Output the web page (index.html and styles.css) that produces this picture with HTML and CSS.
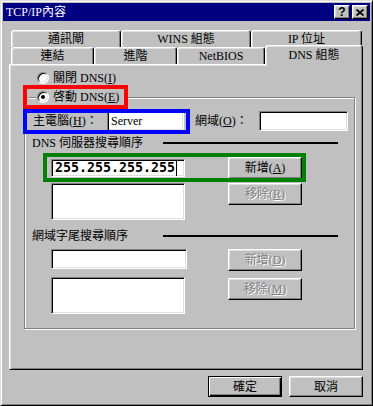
FILE: index.html
```html
<!DOCTYPE html>
<html lang="zh-Hant">
  <head>
    <meta charset="UTF-8" />
    <title>TCP/IP內容</title>
    <link rel="stylesheet" href="styles.css">
  </head>
  <body>
    <div class="window">
      <div class="titlebar">
        <span class="title">TCP/IP內容</span>
        <div class="title_btns">
          <span class="title_btn help">?</span>
          <span class="title_btn">
            <svg width="8" height="7" viewBox="0 0 8 7">
              <path d="M0.5 0.5L7.5 6.5M7.5 0.5L0.5 6.5" stroke="#000" stroke-width="1.7" fill="none" />
            </svg>
          </span>
        </div>
      </div>

      <div class="tabs">
        <div class="tab_row">
          <div class="tab w_110">通訊閘</div>
          <div class="tab w_130">WINS 組態</div>
          <div class="tab w_111">IP 位址</div>
        </div>
        <div class="tab_row">
          <div class="tab w_83">連結</div>
          <div class="tab w_83">進階</div>
          <div class="tab w_88">NetBIOS</div>
          <div class="tab active w_98">DNS 組態</div>
        </div>
      </div>

      <div class="panel">
        <div class="radio first">
          <span class="circle"></span>
          <span class="label">關閉 DNS(<u>I</u>)</span>
        </div>

        <div class="group">
          <div class="group_head mark_red">
            <span class="seg"></span>
            <div class="radio">
              <span class="circle checked"></span>
              <span class="label">啓動 DNS(<u>E</u>)</span>
            </div>
          </div>

          <div class="host_row">
            <div class="host mark_blue">
              <span>主電腦(<u>H</u>)：</span>
              <div class="field w_77">Server</div>
            </div>
            <div class="domain">
              <span class="domain_label">網域(<u>O</u>)：</span>
              <div class="field w_89"></div>
            </div>
          </div>

          <div class="sub_head">
            <span>DNS 伺服器搜尋順序</span>
            <span class="line"></span>
          </div>

          <div class="dns_row mark_green">
            <div class="field ip w_134">255.255.255.255<span class="caret"></span></div>
            <div class="btn">新增(<u>A</u>)</div>
          </div>

          <div class="list_row">
            <div class="list"></div>
            <div class="btn disabled">移除(<u>R</u>)</div>
          </div>

          <div class="sub_head second">
            <span>網域字尾搜尋順序</span>
            <span class="line"></span>
          </div>

          <div class="list_row suffix">
            <div class="field w_136"></div>
            <div class="btn disabled">新增(<u>D</u>)</div>
          </div>

          <div class="list_row last">
            <div class="list"></div>
            <div class="btn disabled">移除(<u>M</u>)</div>
          </div>
        </div>
      </div>

      <div class="footer">
        <div class="btn default">確定</div>
        <div class="btn">取消</div>
      </div>
    </div>
  </body>
</html>
```

FILE: styles.css
```css
* {
  box-sizing: border-box;
}

html,
body {
  margin: 0;
  padding: 0;
}

body {
  width: 373px;
  height: 406px;
  background: #c0c0c0;
  color: #000;
  font-family: "Liberation Serif", "Noto Sans CJK TC", serif;
  font-size: 12px;
  line-height: 16px;
}

u {
  text-decoration: underline;
  text-underline-offset: 1px;
}

/* window frame */
.window {
  width: 373px;
  height: 406px;
  padding: 2px;
  background: #c0c0c0;
  border: 1px solid;
  border-color: #dfdfdf #000 #000 #dfdfdf;
  box-shadow: inset 1px 1px #fff, inset -1px -1px #808080;
}

.titlebar {
  height: 18px;
  display: flex;
  align-items: center;
  padding-left: 3px;
  background: #000080;
  color: #fff;
}
.title_btns {
  display: flex;
  gap: 2px;
  margin-left: auto;
  margin-right: 2px;
}
.title_btn {
  width: 16px;
  height: 14px;
  display: flex;
  align-items: center;
  justify-content: center;
  background: #c0c0c0;
  border: 1px solid;
  border-color: #fff #000 #000 #fff;
  box-shadow: inset -1px -1px #808080, inset 1px 1px #dfdfdf;
}
.title_btn.help {
  color: #000;
  font-family: "Liberation Sans", sans-serif;
  font-weight: bold;
  font-size: 12px;
  line-height: 12px;
}

/* tabs */
.tabs {
  margin-top: 9px;
  padding-left: 8px;
}
.tab_row {
  display: flex;
  align-items: flex-end;
  height: 17px;
}
.tab {
  height: 17px;
  display: flex;
  align-items: center;
  justify-content: center;
  background: #c0c0c0;
  border: 1px solid;
  border-bottom: 0;
  border-color: #fff #000 transparent #fff;
  border-radius: 3px 3px 0 0;
  box-shadow: inset -1px 0 #808080, inset 1px 1px #dfdfdf;
}
.tab.active {
  height: 21px;
  margin-bottom: -2px;
  padding-bottom: 3px;
  position: relative;
  z-index: 1;
}
.w_110 { width: 110px; }
.w_130 { width: 130px; }
.w_111 { width: 111px; }
.w_83 { width: 83px; }
.w_88 { width: 88px; }
.w_98 { width: 98px; }

/* page */
.panel {
  width: 354px;
  height: 306px;
  margin-left: 6px;
  padding-top: 5px;
  border: 1px solid;
  border-color: #fff #000 #000 #fff;
  box-shadow: inset 1px 1px #dfdfdf, inset -1px -1px #808080;
}

.radio {
  display: flex;
  align-items: center;
  height: 16px;
}
.radio.first {
  margin-left: 27px;
}
.circle {
  width: 12px;
  height: 12px;
  flex: none;
  display: flex;
  align-items: center;
  justify-content: center;
  border-radius: 50%;
  background: #fff;
  border: 1px solid;
  border-color: #808080 #fff #fff #808080;
  box-shadow: inset 1px 1px #000, inset -1px -1px #dfdfdf;
}
.circle.checked::after {
  content: "";
  width: 4px;
  height: 4px;
  border-radius: 50%;
  background: #000;
}
.radio .label {
  margin-left: 4px;
}

.group {
  width: 331px;
  margin: 11px 0 0 14px;
  padding-bottom: 14px;
  border: 1px solid #808080;
  box-shadow: inset 1px 1px #fff, 1px 1px #fff;
}
.group_head {
  width: 97px;
  height: 16px;
  display: flex;
  align-items: center;
  margin: -9px 0 0 2px;
  background: #c0c0c0;
}
.seg {
  width: 7px;
  height: 2px;
  align-self: flex-start;
  margin: 8px 1px 0 2px;
  border-top: 1px solid #808080;
  border-bottom: 1px solid #fff;
}

/* highlight frames */
.mark_red {
  outline: 4px solid #ff0000;
}
.mark_blue {
  outline: 4px solid #0000ff;
}
.mark_green {
  outline: 4px solid #008000;
}

.host_row {
  display: flex;
  align-items: center;
  height: 20px;
  margin-top: 6px;
}
.host {
  width: 159px;
  height: 17px;
  margin-left: 2px;
  padding: 0 2px 0 6px;
  display: flex;
  align-items: center;
  justify-content: space-between;
}
.domain {
  display: flex;
  align-items: center;
  margin-left: 9px;
}
.domain_label {
  width: 64px;
}

.field {
  height: 20px;
  flex: none;
  padding-left: 3px;
  background: #fff;
  border: 1px solid;
  border-color: #808080 #fff #fff #808080;
  box-shadow: inset 1px 1px #000, inset -1px -1px #dfdfdf;
  line-height: 18px;
}
.w_77 { width: 77px; }
.w_89 { width: 89px; }
.w_134 { width: 134px; }
.w_136 { width: 136px; }

.field.ip {
  height: 18px;
  display: flex;
  align-items: center;
  font-family: "DejaVu Sans Mono", monospace;
  font-weight: bold;
  font-size: 13.3px;
  line-height: 16px;
}
.caret {
  width: 1px;
  height: 16px;
  margin-left: 1px;
  background: #000;
}

.sub_head {
  display: flex;
  align-items: center;
  height: 16px;
  margin-top: 4px;
  padding-left: 7px;
}
.sub_head.second {
  margin-top: 8px;
}
.sub_head .line {
  width: 175px;
  height: 2px;
  margin-left: auto;
  margin-right: 16px;
  background: #000;
}

.dns_row {
  width: 255px;
  height: 21px;
  display: flex;
  align-items: center;
  margin: 6px 0 0 22px;
  padding-left: 4px;
}
.dns_row .btn {
  margin-left: auto;
}

.list_row {
  display: flex;
  align-items: flex-start;
  margin: 5px 0 0 26px;
}
.list_row.last {
  margin-top: 6px;
}
.list {
  width: 134px;
  height: 37px;
  background: #fff;
  border: 1px solid;
  border-color: #808080 #fff #fff #808080;
  box-shadow: inset 1px 1px #000, inset -1px -1px #dfdfdf;
}
.list_row .btn {
  margin-left: 43px;
}
.list_row.suffix .btn {
  margin-left: 41px;
}
.list_row.last .btn {
  margin-top: 1px;
}

/* push buttons */
.btn {
  width: 74px;
  height: 22px;
  flex: none;
  display: flex;
  align-items: center;
  justify-content: center;
  background: #c0c0c0;
  border: 1px solid;
  border-color: #fff #000 #000 #fff;
  box-shadow: inset -1px -1px #808080, inset 1px 1px #dfdfdf;
}
.btn.disabled {
  color: #808080;
  text-shadow: 1px 1px #fff;
}
.btn.default {
  border-color: #000;
  box-shadow: inset 1px 1px #fff, inset -1px -1px #000, inset -2px -2px #808080;
}

.footer {
  display: flex;
  justify-content: flex-end;
  gap: 7px;
  margin-top: 6px;
  padding-right: 7px;
}
.footer .btn {
  height: 21px;
}
```
